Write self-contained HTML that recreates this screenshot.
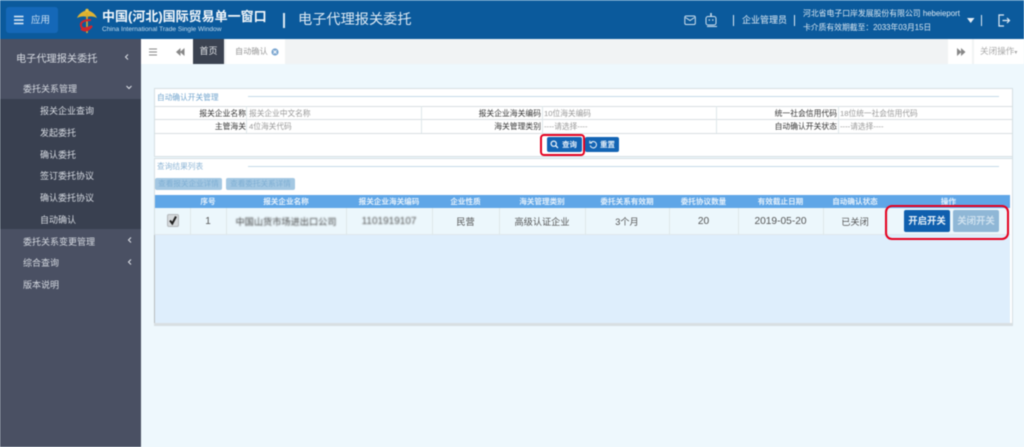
<!DOCTYPE html>
<html lang="zh">
<head>
<meta charset="utf-8">
<title>电子代理报关委托</title>
<style>
html,body{margin:0;padding:0}
body{width:1024px;height:447px;overflow:hidden;position:relative;background:#eef8fd;font-family:"Liberation Sans","Noto Sans CJK SC",sans-serif;color:#555}
.a{position:absolute;white-space:nowrap}
.c{text-align:center}
.r{text-align:right}
#root{position:absolute;left:0;top:0;width:1024px;height:447px;filter:blur(.5px)}
.s{color:#d6dae1;font-size:9px;line-height:14px}
.lb{font-size:7.8px;color:#333;line-height:13px}
.ph{font-size:7.7px;color:#999;line-height:13px}
.th{font-size:7.6px;font-weight:bold;color:#e4f0fb;top:195px;height:13px;line-height:13px;text-align:center}
.td{font-size:9.2px;color:#555;top:208px;height:27px;line-height:28px;text-align:center}
.vl{position:absolute;width:1px;background:#dfe7ea}
</style>
</head>
<body>
<div id="root">
<!-- header -->
<div class="a" style="left:0;top:0;width:1024px;height:39px;background:#0b5a9c"></div>
<div class="a" style="left:0;top:0;width:1024px;height:1px;background:#3d7fb5"></div>
<div class="a" style="left:6px;top:7px;width:52px;height:26px;background:#1568b8;border-radius:3px"></div>
<svg class="a" style="left:14px;top:15px" width="10" height="10"><path d="M0 1.5H9.5M0 5H9.5M0 8.5H9.5" stroke="#e6eef6" stroke-width="1.5"/></svg>
<div class="a" style="left:31px;top:13px;font-size:9.5px;line-height:15px;color:#cfe2f3">应用</div>
<!-- logo -->
<svg class="a" style="left:76px;top:8px" width="22" height="26" viewBox="0 0 22 26">
<path d="M1 10C3 5 8 3 11 2C14 3 19 5 21 10C17 8 14 8 11 9C8 8 5 8 1 10Z" fill="#e0b331"/>
<path d="M11 1V25" stroke="#d9aa2a" stroke-width="1.6"/>
<circle cx="11" cy="2.5" r="1.7" fill="#e8bf3f"/>
<path d="M15 12C8 12 4 14 5 18C6 22 13 20 16 18C13 22 9 24 5 21" fill="none" stroke="#d4232b" stroke-width="2"/>
</svg>
<div class="a" style="left:102px;top:9px;font-size:13px;font-weight:bold;line-height:16px;color:#f4f8fb">中国(河北)国际贸易单一窗口</div>
<div class="a" style="left:102px;top:25px;font-size:6.6px;line-height:9px;color:#c5dced">China International Trade Single Window</div>
<div class="a" style="left:283px;top:13px;width:1.5px;height:15px;background:#dce9f3"></div>
<div class="a" style="left:298px;top:11px;font-size:14.2px;line-height:19px;color:#dde9f3">电子代理报关委托</div>
<svg class="a" style="left:684px;top:15px" width="13" height="11"><rect x=".8" y="1" width="10.5" height="8.5" rx="1.4" fill="none" stroke="#cfe0ee" stroke-width="1"/><path d="M1.5 2.5L6 5.5L10.5 2.5" fill="none" stroke="#cfe0ee"/></svg>
<svg class="a" style="left:704px;top:13px" width="15" height="15"><path d="M7 0V3" stroke="#cfe0ee" stroke-width="1.5"/><rect x="2" y="3.5" width="10" height="8.5" rx="2" fill="none" stroke="#cfe0ee"/><circle cx="5.3" cy="7" r=".8" fill="#cfe0ee"/><circle cx="8.8" cy="7" r=".8" fill="#cfe0ee"/><path d="M3 13.5H13" stroke="#cfe0ee"/></svg>
<div class="a" style="left:733px;top:15px;width:1px;height:11px;background:#dce9f3"></div>
<div class="a" style="left:742px;top:14px;font-size:9px;line-height:13px;color:#e0ebf4">企业管理员</div>
<div class="a" style="left:794px;top:15px;width:1px;height:11px;background:#dce9f3"></div>
<div class="a" style="left:803px;top:8px;font-size:7.85px;line-height:11px;color:#dbe8f2">河北省电子口岸发展股份有限公司 hebeieport</div>
<div class="a" style="left:803px;top:22px;font-size:7.8px;line-height:11px;color:#dbe8f2">卡介质有效期截至：2033年03月15日</div>
<svg class="a" style="left:967px;top:18px" width="8" height="6"><path d="M0 0H7.5L3.7 5Z" fill="#e6eef6"/></svg>
<div class="a" style="left:981px;top:15px;width:1px;height:11px;background:#dce9f3"></div>
<svg class="a" style="left:998px;top:14px" width="14" height="13"><path d="M6 1H1V12H6" fill="none" stroke="#e0ebf4" stroke-width="1.2"/><path d="M4.5 6.5H11M9 4L11.5 6.5L9 9" fill="none" stroke="#e0ebf4" stroke-width="1.2"/></svg>

<!-- sidebar -->
<div class="a" style="left:0;top:39px;width:141px;height:408px;background:#4a5063"></div>
<div class="a" style="left:0;top:99px;width:141px;height:130px;background:#394050"></div>
<div class="a s" style="left:16px;top:52px;font-size:10.2px;line-height:16px">电子代理报关委托</div>
<svg class="a" style="left:124px;top:53px" width="6" height="8"><path d="M4 1.5L1.5 4L4 6.5" fill="none" stroke="#dfe2e8" stroke-width="1"/></svg>
<div class="a s" style="left:23px;top:82px">委托关系管理</div>
<svg class="a" style="left:125px;top:85px" width="8" height="6"><path d="M1.5 1L4 3.5L6.5 1" fill="none" stroke="#dfe2e8" stroke-width="1"/></svg>
<div class="a s" style="left:40px;top:104px">报关企业查询</div>
<div class="a s" style="left:40px;top:126px">发起委托</div>
<div class="a s" style="left:40px;top:148px">确认委托</div>
<div class="a s" style="left:40px;top:169px">签订委托协议</div>
<div class="a s" style="left:40px;top:191px">确认委托协议</div>
<div class="a s" style="left:40px;top:213px">自动确认</div>
<div class="a s" style="left:23px;top:235px">委托关系变更管理</div>
<svg class="a" style="left:127px;top:236px" width="6" height="8"><path d="M4 1.5L1.5 4L4 6.5" fill="none" stroke="#dfe2e8" stroke-width="1"/></svg>
<div class="a s" style="left:23px;top:256px">综合查询</div>
<svg class="a" style="left:127px;top:258px" width="6" height="8"><path d="M4 1.5L1.5 4L4 6.5" fill="none" stroke="#dfe2e8" stroke-width="1"/></svg>
<div class="a s" style="left:23px;top:278px">版本说明</div>

<!-- tab bar -->
<div class="a" style="left:141px;top:39px;width:883px;height:25px;background:#f1f3f4"></div>
<div class="a" style="left:141px;top:39px;width:52px;height:25px;background:#fff"></div>
<svg class="a" style="left:149px;top:48px" width="9" height="8"><path d="M0 1H8M0 4H8M0 7H8" stroke="#888" stroke-width="1"/></svg>
<svg class="a" style="left:176px;top:48px" width="9" height="8"><path d="M4.5 0V8L0 4ZM8.5 0V8L4 4Z" fill="#888"/></svg>
<div class="a c" style="left:193px;top:39px;width:31px;height:25px;line-height:25px;background:#3b4250;color:#e5e7ea;font-size:9px">首页</div>
<div class="a" style="left:226px;top:39px;width:59px;height:25px;background:#fff"></div>
<div class="a" style="left:235px;top:39px;line-height:25px;color:#999;font-size:8.2px">自动确认</div>
<svg class="a" style="left:271px;top:48px" width="8" height="8"><circle cx="4" cy="4" r="3.6" fill="#7ba6d0"/><path d="M2.5 2.5L5.5 5.5M5.5 2.5L2.5 5.5" stroke="#fff" stroke-width=".9"/></svg>
<div class="a" style="left:948px;top:39px;width:24px;height:25px;background:#fff"></div>
<div class="a" style="left:974px;top:39px;width:50px;height:25px;background:#fff"></div>
<svg class="a" style="left:957px;top:48px" width="9" height="8"><path d="M0 0V8L4.5 4ZM4 0V8L8.5 4Z" fill="#888"/></svg>
<div class="a" style="left:980px;top:39px;line-height:25px;color:#aaa;font-size:8.6px">关闭操作<span style="font-size:6px">▾</span></div>

<!-- panel 1 -->
<div class="a" style="left:154px;top:88px;width:857px;height:67px;background:#fff;border:1px solid #d6dfe3;box-sizing:content-box"></div>
<div class="a" style="left:157px;top:92px;font-size:7.7px;line-height:11px;color:#6fa3cd">自动确认开关管理</div>
<div class="a" style="left:248px;top:96px;width:751px;height:1px;background:#c5dae8"></div>
<div class="a" style="left:155px;top:106px;width:857px;height:1px;background:#d9dfe2"></div>
<div class="a" style="left:155px;top:119px;width:857px;height:1px;background:#d9dfe2"></div>
<div class="a" style="left:155px;top:133px;width:857px;height:1px;background:#d9dfe2"></div>
<div class="vl" style="left:246px;top:106px;height:27px"></div>
<div class="vl" style="left:421px;top:106px;height:27px"></div>
<div class="vl" style="left:542px;top:106px;height:27px"></div>
<div class="vl" style="left:716px;top:106px;height:27px"></div>
<div class="vl" style="left:838px;top:106px;height:27px"></div>
<div class="a lb r" style="left:160px;width:86px;top:107px">报关企业名称</div>
<div class="a ph" style="left:249px;top:107px">报关企业中文名称</div>
<div class="a lb r" style="left:456px;width:85px;top:107px">报关企业海关编码</div>
<div class="a ph" style="left:544px;top:107px">10位海关编码</div>
<div class="a lb r" style="left:750px;width:87px;top:107px">统一社会信用代码</div>
<div class="a ph" style="left:840px;top:107px">18位统一社会信用代码</div>
<div class="a lb r" style="left:160px;width:86px;top:120px">主管海关</div>
<div class="a ph" style="left:249px;top:120px">4位海关代码</div>
<div class="a lb r" style="left:456px;width:85px;top:120px">海关管理类别</div>
<div class="a ph" style="left:544px;top:120px">----请选择----</div>
<div class="a lb r" style="left:750px;width:87px;top:120px">自动确认开关状态</div>
<div class="a ph" style="left:840px;top:120px">----请选择----</div>
<!-- buttons -->
<div class="a" style="left:547px;top:137px;width:35px;height:15px;background:#1364b4;border-radius:2px"></div>
<svg class="a" style="left:550px;top:140px" width="9" height="9"><circle cx="3.7" cy="3.7" r="2.6" fill="none" stroke="#eef4fa" stroke-width="1.2"/><path d="M5.6 5.6L8 8" stroke="#eef4fa" stroke-width="1.3"/></svg>
<div class="a" style="left:562px;top:137px;line-height:15px;font-size:7.5px;font-weight:bold;color:#e5eff8">查询</div>
<div class="a" style="left:585px;top:137px;width:34px;height:15px;background:#1364b4;border-radius:2px"></div>
<svg class="a" style="left:589px;top:140px" width="9" height="9"><path d="M2 2.5A3.2 3.2 0 1 1 1.2 5.5M.8 .8V3H3" fill="none" stroke="#eef4fa" stroke-width="1"/></svg>
<div class="a" style="left:600px;top:137px;line-height:15px;font-size:7.5px;font-weight:bold;color:#e5eff8">重置</div>
<div class="a" style="left:540px;top:134px;width:45px;height:22px;box-sizing:border-box;border:2.5px solid #e5001f;border-radius:4px"></div>

<!-- panel 2 -->
<div class="a" style="left:154px;top:158px;width:857px;height:166px;background:#fff;border:1px solid #d6dfe3"></div>
<div class="a" style="left:157px;top:161px;font-size:7.7px;line-height:11px;color:#8fb6d6">查询结果列表</div>
<div class="a" style="left:248px;top:166px;width:751px;height:1px;background:#c5dae8"></div>
<div class="a c" style="left:155px;top:178px;width:67px;height:12px;line-height:12px;background:#a3c7e2;border-radius:2px;font-size:7.6px;color:#7eaed3">查看报关企业详情</div>
<div class="a c" style="left:226px;top:178px;width:69px;height:12px;line-height:12px;background:#a3c7e2;border-radius:2px;font-size:7.6px;color:#7eaed3">查看委托关系详情</div>
<!-- grid -->
<div class="a" style="left:155px;top:195px;width:855px;height:13px;background:#5fa6e7"></div>
<div class="a" style="left:155px;top:208px;width:855px;height:27px;background:#ecf7fc"></div>
<div class="a" style="left:155px;top:235px;width:855px;height:89px;background:#deeefc"></div>
<div class="a" style="left:154px;top:235px;width:1px;height:89px;background:#b8bcbe"></div>
<div class="a" style="left:154px;top:323px;width:858px;height:2px;background:#d9dfe2"></div>
<div class="a" style="left:155px;top:234px;width:855px;height:1px;background:#e0e8ec"></div>
<div class="vl" style="left:190px;top:208px;height:27px"></div>
<div class="vl" style="left:226px;top:208px;height:27px"></div>
<div class="vl" style="left:346px;top:208px;height:27px"></div>
<div class="vl" style="left:432px;top:208px;height:27px"></div>
<div class="vl" style="left:499px;top:208px;height:27px"></div>
<div class="vl" style="left:585px;top:208px;height:27px"></div>
<div class="vl" style="left:669px;top:208px;height:27px"></div>
<div class="vl" style="left:738px;top:208px;height:27px"></div>
<div class="vl" style="left:823px;top:208px;height:27px"></div>
<div class="vl" style="left:887px;top:208px;height:27px"></div>
<div class="a th" style="left:190px;width:36px">序号</div>
<div class="a th" style="left:226px;width:120px">报关企业名称</div>
<div class="a th" style="left:346px;width:86px">报关企业海关编码</div>
<div class="a th" style="left:432px;width:67px">企业性质</div>
<div class="a th" style="left:499px;width:86px">海关管理类别</div>
<div class="a th" style="left:585px;width:84px">委托关系有效期</div>
<div class="a th" style="left:669px;width:69px">委托协议数量</div>
<div class="a th" style="left:738px;width:85px">有效截止日期</div>
<div class="a th" style="left:823px;width:64px">自动确认状态</div>
<div class="a th" style="left:887px;width:123px">操作</div>
<div class="a" style="left:167px;top:214px;width:12px;height:13px;background:#d5d9dc;border:1px solid #b5b9bc;border-radius:2px;box-sizing:border-box"></div>
<svg class="a" style="left:168px;top:215px" width="10" height="11"><path d="M2 5.5L4.3 8.5L8 1.5" fill="none" stroke="#222" stroke-width="2"/></svg>
<div class="a td" style="left:190px;width:36px;font-size:10px">1</div>
<div class="a td" style="left:226px;width:120px;filter:blur(.9px);color:#444">中国山货市场进出口公司</div>
<div class="a td" style="left:346px;width:86px;filter:blur(.9px);font-size:10px">1101919107</div>
<div class="a td" style="left:432px;width:67px">民营</div>
<div class="a td" style="left:499px;width:86px">高级认证企业</div>
<div class="a td" style="left:585px;width:84px">3个月</div>
<div class="a td" style="left:669px;width:69px;font-size:10.2px">20</div>
<div class="a td" style="left:738px;width:85px;font-size:10.2px">2019-05-20</div>
<div class="a td" style="left:823px;width:64px">已关闭</div>
<div class="a c" style="left:904px;top:210px;width:46px;height:22px;line-height:22px;background:#0f5fae;border-radius:2px;color:#e6f0f8;font-size:9.4px;font-weight:bold">开启开关</div>
<div class="a c" style="left:953px;top:210px;width:46px;height:22px;line-height:22px;background:#8fb7d6;border-radius:2px;color:#cde0ee;font-size:9.4px;font-weight:bold">关闭开关</div>
<div class="a" style="left:885px;top:205px;width:124px;height:35px;box-sizing:border-box;border:2.5px solid #e5001f;border-radius:7px"></div>
<div class="a" style="left:1012px;top:88px;width:1px;height:237px;background:#d6dfe3"></div>
</div>
</body>
</html>
